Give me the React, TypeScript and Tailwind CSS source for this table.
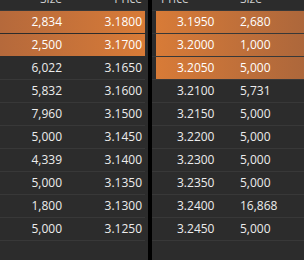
const bids = [
  { size: '2,834', price: '3.1800', hot: true },
  { size: '2,500', price: '3.1700', hot: true },
  { size: '6,022', price: '3.1650' },
  { size: '5,832', price: '3.1600' },
  { size: '7,960', price: '3.1500' },
  { size: '5,000', price: '3.1450' },
  { size: '4,339', price: '3.1400' },
  { size: '5,000', price: '3.1350' },
  { size: '1,800', price: '3.1300' },
  { size: '5,000', price: '3.1250' },
];

const asks = [
  { price: '3.1950', size: '2,680', hot: true },
  { price: '3.2000', size: '1,000', hot: true },
  { price: '3.2050', size: '5,000', hot: true },
  { price: '3.2100', size: '5,731' },
  { price: '3.2150', size: '5,000' },
  { price: '3.2200', size: '5,000' },
  { price: '3.2300', size: '5,000' },
  { price: '3.2350', size: '5,000' },
  { price: '3.2400', size: '16,868' },
  { price: '3.2450', size: '5,000' },
];

export default function App() {
  return (
    <div
      className="w-[304px] h-[260px] overflow-hidden flex bg-[#2c2c2c] text-[12px] text-[#ececec]"
      style={{ fontFamily: '"Open Sans", "Liberation Sans", sans-serif' }}
    >
      {/* bid side */}
      <div className="w-[148px] pr-[3px] mt-[-12px]">
        <div className="flex h-[23px] items-center border-b border-[#383838] text-[#cfcfcf]">
          <span className="w-[62px] text-right">Size</span>
          <span className="w-[80px] text-right">Price</span>
        </div>
        {bids.map((b, i) => (
          <div
            key={i}
            className={
              b.hot
                ? 'flex h-[23px] items-center border-b border-[#2c2c2c] bg-gradient-to-r from-[#b5693b] to-[#d87b37] text-white'
                : 'flex h-[23px] items-center border-b border-[#383838]'
            }
          >
            <span className="w-[62px] text-right">{b.size}</span>
            <span className="w-[80px] text-right">{b.price}</span>
          </div>
        ))}
      </div>

      <div className="w-[4px] bg-black" />

      {/* ask side */}
      <div className="flex-1 mt-[-12px]">
        <div className="flex h-[23px] items-center border-b border-[#383838] text-[#cfcfcf] pl-[9px]">
          <span className="w-[79px]">Price</span>
          <span>Size</span>
        </div>
        {asks.map((a, i) => (
          <div key={i} className="border-b border-[#383838] pl-[4px] h-[23px]">
            <div
              className={
                a.hot
                  ? 'flex h-[22px] items-center pl-[21px] bg-gradient-to-r from-[#d87b37] to-[#ad673b] text-white'
                  : 'flex h-[22px] items-center pl-[21px]'
              }
            >
              <span className="w-[63px]">{a.price}</span>
              <span>{a.size}</span>
            </div>
          </div>
        ))}
      </div>
    </div>
  );
}
